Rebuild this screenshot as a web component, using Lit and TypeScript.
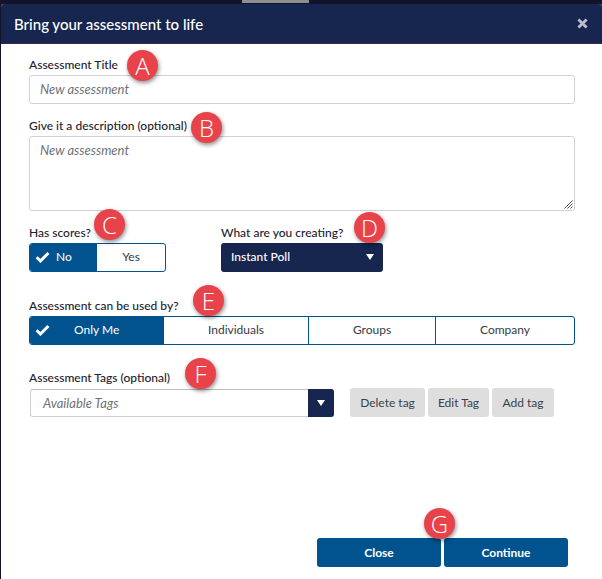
import { LitElement, html, css } from "lit";
import { customElement } from "lit/decorators.js";

const check = html`<svg class="check" width="15" height="12" viewBox="0 0 15 12"><path d="M1.6 6.2 5.4 10 13.4 2" fill="none" stroke="#fff" stroke-width="3"/></svg>`;

@customElement("app-root")
export class AppRoot extends LitElement {
  static styles = css`
    :host { display: block; width: 602px; height: 579px; overflow: hidden; background: #14132b; font-family: Lato, sans-serif; color: #1f2430; position: relative; }
    * { box-sizing: border-box; }
    .top { height: 4px; display: flex; }
    .top i { display: block; margin-left: 242px; width: 67px; height: 3px; background: #8f8f92; }
    .modal { margin-left: 1px; height: 575px; background: #fff; border-radius: 3px 3px 0 0; display: flex; flex-direction: column; }
    header { height: 40px; background: #16264f; border-bottom: 1px solid #4a2148; padding: 0 14px 0 13px; display: flex; align-items: center; justify-content: space-between; color: #fff; font-size: 15px; font-weight: 500; border-radius: 3px 3px 0 0; }
    .x { width: 11px; height: 11px; }
    main { flex: 1; padding: 13px 27px 0 28px; display: flex; flex-direction: column; position: relative; }
    label { display: block; font-size: 12px; font-weight: 500; line-height: 16px; height: 18px; color: #1c2130; }
    .field { position: relative; }
    .input { height: 29px; border: 1px solid #cfd3d8; border-radius: 3px; padding: 0 10px; line-height: 27px; font-size: 13px; font-style: italic; color: #6e7278; }
    .ta { height: 75px; position: relative; line-height: 27px; }
    .grip { position: absolute; right: 1px; bottom: 1px; }
    .badge { position: absolute; width: 31px; height: 31px; border-radius: 50%; background: #e8434a; color: #fff; display: flex; align-items: center; justify-content: center; font-size: 24px; line-height: 1; box-shadow: 1px 2px 4px rgba(0,0,0,.45); font-family: "Open Sans", sans-serif; font-weight: 300; z-index: 2; }
    .row2 { display: flex; margin-top: 14px; }
    .c1 { width: 192px; }
    .toggle { display: flex; height: 29px; width: 137px; border: 1px solid #00538f; border-radius: 3px; font-size: 12px; overflow: hidden; }
    .on { background: #00538f; color: #fff; display: flex; align-items: center; position: relative; padding-bottom: 2px; }
    .off { display: flex; align-items: center; justify-content: center; color: #333a48; border-left: 1px solid #00538f; padding-bottom: 2px; }
    .check { position: absolute; left: 5px; top: 7px; }
    .dd { width: 162px; height: 29px; background: #16264f; border-radius: 3px; color: #fff; font-size: 12px; display: flex; align-items: center; justify-content: space-between; padding: 0 9px 2px 10px; font-weight: 500; }
    .tri { width: 0; height: 0; border-left: 4px solid transparent; border-right: 4px solid transparent; border-top: 6px solid #fff; }
    .row3 { margin-top: 26px; }
    .row4 { margin-top: 25px; }
    .row5 { display: flex; }
    .sel { width: 304px; height: 28px; border: 1px solid #cfcfcf; border-top-color: #bdbdbd; border-radius: 3px; margin: 1px 0 0 1px; display: flex; align-items: stretch; font-style: italic; font-size: 13px; color: #6e7278; }
    .sel span { flex: 1; padding-left: 12px; line-height: 26px; }
    .sel b { width: 26px; margin: -1px -1px -1px 0; background: #16264f; border-radius: 0 3px 3px 0; display: flex; align-items: center; justify-content: center; }
    .gb { height: 29px; background: #dedede; border-radius: 3px; font-size: 12px; color: #3a3f4a; display: flex; align-items: center; justify-content: center; margin-left: 3px; }
    .spacer { flex: 1; }
    .foot { display: flex; padding: 0 0 12px 288px; gap: 3px; }
    .pb { width: 124px; height: 29px; background: #00538f; color: #fff; border-radius: 3px; display: flex; align-items: center; justify-content: center; font-size: 12px; font-weight: 700; }
  `;

  render() {
    const grip = html`<svg class="grip" width="9" height="9" viewBox="0 0 9 9"><path d="M0.5 8.5 8.5 0.5M3.5 8.5 8.5 3.5M6.5 8.5 8.5 6.5" stroke="#555" fill="none"/></svg>`;
    return html`
      <div class="top"><i></i></div>
      <div class="modal">
        <header>
          <span>Bring your assessment to life</span>
          <svg class="x" viewBox="0 0 11 11"><path d="M1.4 1.4 9.6 9.6M9.6 1.4 1.4 9.6" stroke="#b9bfcc" stroke-width="2.8"/></svg>
        </header>
        <main>
          <div class="field">
            <label>Assessment Title</label>
            <div class="input">New assessment</div>
          </div>
          <div class="field" style="margin-top:14px">
            <label>Give it a description (optional)</label>
            <div class="input ta">New assessment${grip}</div>
          </div>
          <div class="row2">
            <div class="c1">
              <label>Has scores?</label>
              <div class="toggle">
                <div class="on" style="width:67px">${check}<span style="margin-left:26px">No</span></div>
                <div class="off" style="flex:1;border-left:0">Yes</div>
              </div>
            </div>
            <div>
              <label>What are you creating?</label>
              <div class="dd"><span>Instant Poll</span><i class="tri"></i></div>
            </div>
          </div>
          <div class="row3">
            <label>Assessment can be used by?</label>
            <div class="toggle" style="width:546px">
              <div class="on" style="width:134px">${check}<span style="margin-left:44px">Only Me</span></div>
              <div class="off" style="width:144px;border-left:0">Individuals</div>
              <div class="off" style="width:127px">Groups</div>
              <div class="off" style="flex:1">Company</div>
            </div>
          </div>
          <div class="row4">
            <label>Assessment Tags (optional)</label>
            <div class="row5">
              <div class="sel"><span>Available Tags</span><b><i class="tri"></i></b></div>
              <div class="gb" style="width:75px;margin-left:16px">Delete tag</div>
              <div class="gb" style="width:61px">Edit Tag</div>
              <div class="gb" style="width:62px">Add tag</div>
            </div>
          </div>
          <div class="spacer"></div>
          <div class="foot">
            <div class="pb">Close</div>
            <div class="pb">Continue</div>
          </div>
          <div class="badge" style="left:126px;top:6px">A</div>
          <div class="badge" style="left:190px;top:68px">B</div>
          <div class="badge" style="left:93px;top:165px">C</div>
          <div class="badge" style="left:353px;top:168px">D</div>
          <div class="badge" style="left:192px;top:241px">E</div>
          <div class="badge" style="left:184px;top:314px">F</div>
          <div class="badge" style="left:423px;top:464px">G</div>
        </main>
      </div>
    `;
  }
}
